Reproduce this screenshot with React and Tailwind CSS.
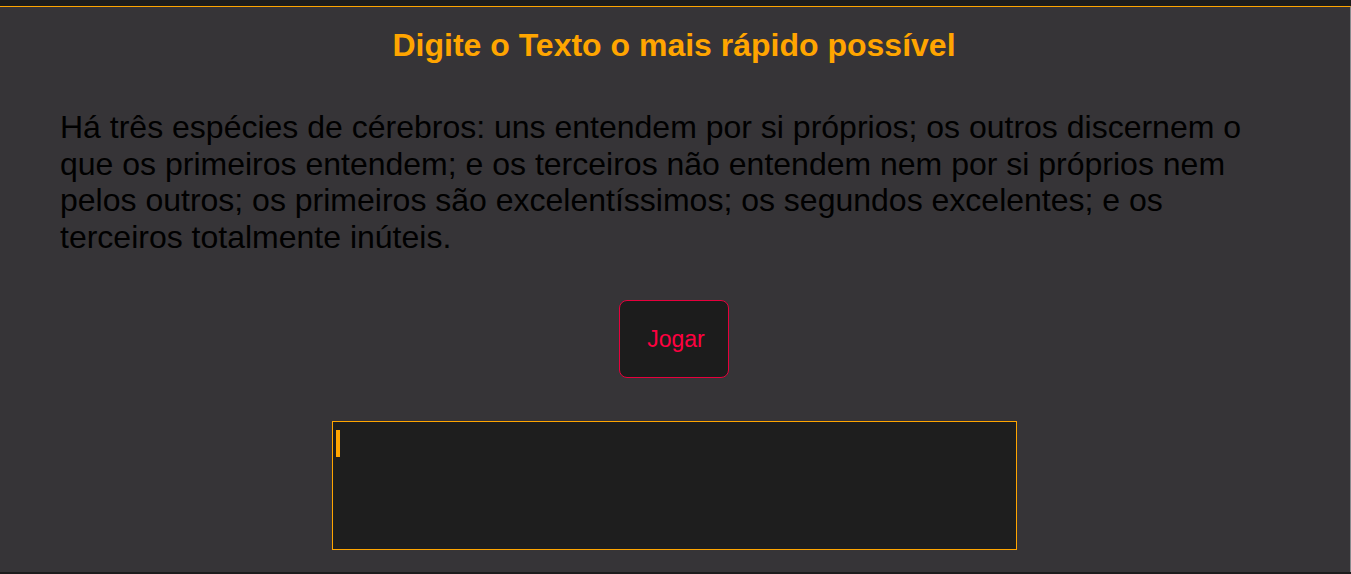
export default function App() {
	return (
		<div className="min-h-screen bg-[#1c1c1c] pt-[6px] font-['Liberation_Sans',Arial,sans-serif]">
			<div className="h-[566px] w-[1351px] pr-[2px] border-t border-r border-t-[#ffa500] border-r-[#8a8a8e] bg-[#363437] flex flex-col items-center">
				{/* Title */}
				<h1 className="mt-[20px] text-[32px] leading-[37px] font-bold text-[#ffa500]">
					Digite o Texto o mais rápido possível
				</h1>

				{/* Quote to type */}
				<p className="self-stretch mt-[45px] px-[60px] text-[32px] leading-[36.7px] text-black">
					Há três espécies de cérebros: uns entendem por si próprios; os outros discernem o que os
					primeiros entendem; e os terceiros não entendem nem por si próprios nem pelos outros; os
					primeiros são excelentíssimos; os segundos excelentes; e os terceiros totalmente inúteis.
				</p>

				{/* Play button */}
				<button className="mt-[44px] w-[110px] h-[78px] pl-[4px] rounded-[8px] border border-[#e6003c] bg-[#1c1c1c] text-[23px] text-[#ff0040]">
					Jogar
				</button>

				{/* Typing area */}
				<div className="mt-[44px] w-[683px] h-[127px] shadow-[0_0_0_1px_#ffa500] bg-[#1e1e1e] relative">
					<span className="absolute left-[3px] top-[8px] w-[4px] h-[27px] bg-[#ffa500]" />
				</div>
			</div>
		</div>
	);
}
